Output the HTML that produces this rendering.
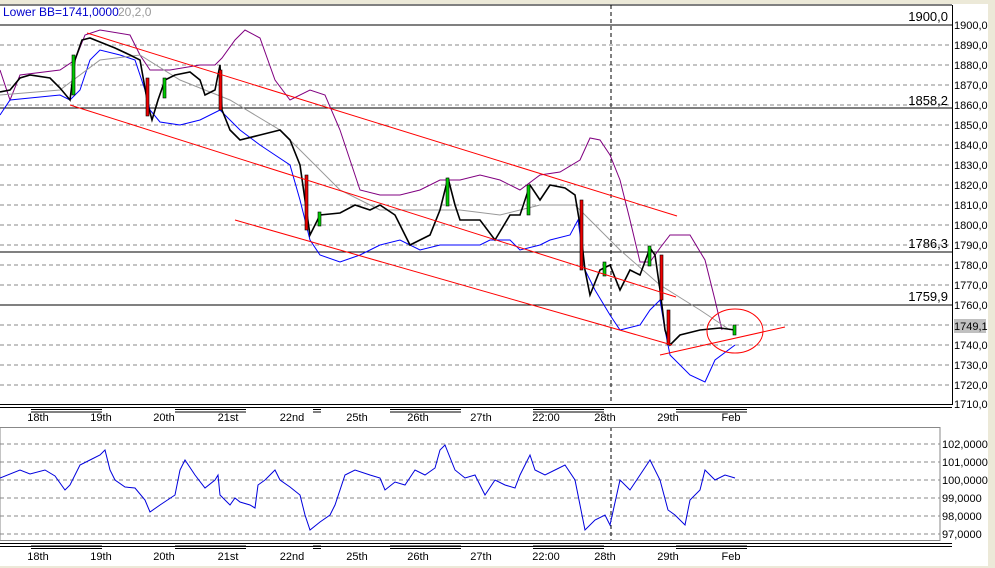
<!DOCTYPE html>
<html><head><meta charset="utf-8"><style>
body{margin:0;width:995px;height:568px;overflow:hidden;background:#ece9d8;font-family:"Liberation Sans",sans-serif}
svg{display:block}
text{font-family:"Liberation Sans",sans-serif;font-size:11px}
</style></head><body>
<svg width="995" height="568" xmlns="http://www.w3.org/2000/svg">
<rect x="0" y="4" width="988" height="562" fill="#fff"/>
<line x1="0" y1="5" x2="952" y2="5" stroke="#000"/>
<g stroke="#888" stroke-dasharray="4,3">
<line x1="0" y1="45" x2="952" y2="45"/><line x1="0" y1="65" x2="952" y2="65"/><line x1="0" y1="85" x2="952" y2="85"/><line x1="0" y1="105" x2="952" y2="105"/><line x1="0" y1="125" x2="952" y2="125"/><line x1="0" y1="145" x2="952" y2="145"/><line x1="0" y1="165" x2="952" y2="165"/><line x1="0" y1="185" x2="952" y2="185"/><line x1="0" y1="205" x2="952" y2="205"/><line x1="0" y1="225" x2="952" y2="225"/><line x1="0" y1="245" x2="952" y2="245"/><line x1="0" y1="265" x2="952" y2="265"/><line x1="0" y1="285" x2="952" y2="285"/><line x1="0" y1="325" x2="952" y2="325"/><line x1="0" y1="345" x2="952" y2="345"/><line x1="0" y1="365" x2="952" y2="365"/><line x1="0" y1="385" x2="952" y2="385"/>
<line x1="0" y1="444" x2="940" y2="444"/><line x1="0" y1="462" x2="940" y2="462"/><line x1="0" y1="480" x2="940" y2="480"/><line x1="0" y1="498" x2="940" y2="498"/><line x1="0" y1="516" x2="940" y2="516"/><line x1="0" y1="534" x2="940" y2="534"/>
</g>
<g stroke="#000">
<line x1="0" y1="25" x2="952" y2="25"/><line x1="0" y1="108" x2="952" y2="108"/><line x1="0" y1="252" x2="952" y2="252"/><line x1="0" y1="305" x2="952" y2="305"/>
<line x1="952.5" y1="5" x2="952.5" y2="405"/>
<line x1="0" y1="404.5" x2="952" y2="404.5"/><line x1="0" y1="407.5" x2="952" y2="407.5"/>
<line x1="0" y1="543.5" x2="952" y2="543.5"/><line x1="0" y1="546.5" x2="952" y2="546.5"/>
<line x1="611" y1="5" x2="611" y2="404" stroke-dasharray="4,3"/>
<line x1="611" y1="427" x2="611" y2="541" stroke-dasharray="4,3"/>
</g>
<rect x="0" y="427.5" width="940" height="113" fill="none" stroke="#888"/>
<g stroke="#000" stroke-width="1">
<line x1="31" y1="409.5" x2="102" y2="409.5"/><line x1="31" y1="412" x2="102" y2="412"/>
<line x1="175" y1="409.5" x2="246" y2="409.5"/><line x1="175" y1="412" x2="246" y2="412"/>
<line x1="313" y1="409.5" x2="321" y2="409.5"/><line x1="313" y1="412" x2="321" y2="412"/>
<line x1="390" y1="409.5" x2="461" y2="409.5"/><line x1="390" y1="412" x2="461" y2="412"/>
<line x1="533" y1="409.5" x2="604" y2="409.5"/><line x1="533" y1="412" x2="604" y2="412"/>
<line x1="676" y1="409.5" x2="747" y2="409.5"/><line x1="676" y1="412" x2="747" y2="412"/>
<line x1="31" y1="546" x2="102" y2="546"/><line x1="31" y1="548.5" x2="102" y2="548.5"/>
<line x1="175" y1="546" x2="246" y2="546"/><line x1="175" y1="548.5" x2="246" y2="548.5"/>
<line x1="313" y1="546" x2="321" y2="546"/><line x1="313" y1="548.5" x2="321" y2="548.5"/>
<line x1="390" y1="546" x2="461" y2="546"/><line x1="390" y1="548.5" x2="461" y2="548.5"/>
<line x1="533" y1="546" x2="604" y2="546"/><line x1="533" y1="548.5" x2="604" y2="548.5"/>
<line x1="676" y1="546" x2="747" y2="546"/><line x1="676" y1="548.5" x2="747" y2="548.5"/>
</g>
<polyline fill="none" stroke="#800080" points="0,70 10,100 20,75 60,70 75,60 85,35 100,30 130,35 140,55 150,70 170,70 200,65 215,65 222,58 235,40 245,30 260,38 275,80 290,100 310,90 325,95 340,130 360,190 380,195 400,195 420,190 440,180 460,180 480,175 500,180 520,190 540,175 560,172 580,160 590,138 600,140 610,155 620,180 630,220 640,262 650,262 660,248 670,235 690,235 705,260 715,300 722,330"/>
<polyline fill="none" stroke="#0000ff" points="0,115 10,100 30,98 60,95 70,100 80,90 90,60 100,50 120,55 135,60 145,90 150,110 160,122 180,125 200,120 220,110 240,130 260,145 275,155 290,165 300,200 310,240 320,255 340,262 360,255 380,245 400,240 420,250 440,245 460,245 480,245 490,240 510,240 520,250 540,245 550,240 570,235 578,220 585,270 595,290 610,315 620,330 640,325 650,310 660,300 665,330 670,355 690,375 705,382 715,360 735,345"/>
<polyline fill="none" stroke="#999" points="0,95 60,90 100,60 140,55 180,80 230,100 280,130 300,150 340,190 380,210 420,210 460,210 500,215 540,205 575,205 620,250 660,285 700,310 730,330"/>
<polyline fill="none" stroke="#000" stroke-width="1.6" points="0,92 10,90 20,78 30,75 50,78 60,88 70,100 75,60 82,40 90,38 100,42 115,48 130,55 140,60 148,105 152,120 158,100 165,80 175,75 190,72 200,80 205,95 215,90 220,65 222,110 230,130 240,140 260,135 280,130 290,140 300,165 305,200 310,235 320,215 340,213 355,205 370,210 380,205 395,215 400,225 410,245 420,240 430,235 440,210 448,178 455,205 460,220 480,220 495,240 510,215 520,215 530,185 540,200 550,185 565,188 575,195 580,225 585,270 590,295 600,270 610,265 620,290 630,270 640,275 650,248 655,255 660,290 665,330 670,345 680,335 700,330 720,328 735,330"/>
<g fill="#00cc00" stroke="#000" stroke-width="0.6"><rect x="72" y="55" width="3" height="40"/><rect x="163" y="78" width="3" height="20"/><rect x="318" y="212" width="3" height="14"/><rect x="446" y="178" width="3" height="28"/><rect x="527" y="185" width="3" height="30"/><rect x="648" y="246" width="3" height="20"/><rect x="733" y="325" width="3" height="10"/><rect x="603" y="262" width="3" height="14"/></g>
<g fill="#ee0000" stroke="#000" stroke-width="0.6"><rect x="146" y="78" width="3" height="38"/><rect x="219" y="70" width="3" height="40"/><rect x="305" y="175" width="3" height="55"/><rect x="580" y="200" width="3" height="70"/><rect x="660" y="255" width="3" height="45"/><rect x="667" y="310" width="3" height="35"/></g>
<g stroke="#f00" fill="none">
<line x1="87" y1="33" x2="677" y2="216"/>
<line x1="70" y1="105" x2="676" y2="297"/>
<line x1="235" y1="220" x2="672" y2="345"/>
<line x1="660" y1="355" x2="785" y2="327"/>
<ellipse cx="735" cy="331" rx="28" ry="22"/>
</g>
<polyline fill="none" stroke="#0000dd" points="0,478 20,470 30,474 45,470 55,476 65,490 70,485 80,465 90,460 100,455 105,450 110,470 115,480 125,487 135,488 145,500 150,512 160,505 175,495 180,470 185,460 195,475 205,488 215,480 218,475 220,495 230,505 235,498 240,502 250,505 255,508 258,485 265,480 275,470 280,480 290,487 300,495 305,515 310,530 320,522 330,515 335,505 345,475 355,470 370,475 380,478 385,490 395,482 405,485 415,470 425,475 435,468 440,450 445,445 455,470 465,478 475,475 485,495 495,480 505,485 515,488 520,475 530,455 535,470 545,475 555,470 565,465 575,480 580,505 585,530 595,520 605,515 610,525 620,480 630,490 640,475 650,460 660,480 668,510 675,515 685,525 690,500 700,490 705,470 715,480 725,475 735,478"/>
<text x="3" y="16" fill="#0000cc" style="font-size:12px">Lower BB=1741,0000</text><text x="118" y="16" fill="#999" style="font-size:12px">20,2,0</text>
<g text-anchor="end" fill="#000" style="font-size:13px"><text x="948" y="21" style="font-size:13px">1900,0</text><text x="948" y="105" style="font-size:13px">1858,2</text><text x="948" y="248" style="font-size:13px">1786,3</text><text x="948" y="301" style="font-size:13px">1759,9</text></g>
<rect x="954" y="319" width="32" height="14" fill="#c0c0c0"/>
<g fill="#000"><text x="954" y="29">1900,0</text><text x="954" y="49">1890,0</text><text x="954" y="69">1880,0</text><text x="954" y="89">1870,0</text><text x="954" y="109">1860,0</text><text x="954" y="129">1850,0</text><text x="954" y="149">1840,0</text><text x="954" y="169">1830,0</text><text x="954" y="189">1820,0</text><text x="954" y="209">1810,0</text><text x="954" y="229">1800,0</text><text x="954" y="249">1790,0</text><text x="954" y="269">1780,0</text><text x="954" y="289">1770,0</text><text x="954" y="309">1760,0</text><text x="954" y="330">1749,1</text><text x="954" y="349">1740,0</text><text x="954" y="369">1730,0</text><text x="954" y="389">1720,0</text><text x="954" y="408">1710,0</text>
<text x="942" y="448">102,0000</text><text x="942" y="466">101,0000</text><text x="942" y="484">100,0000</text><text x="942" y="502">99,0000</text><text x="942" y="520">98,0000</text><text x="942" y="538">97,0000</text></g>
<g fill="#000" text-anchor="middle">
<text x="38" y="421">18th</text><text x="101" y="421">19th</text><text x="164" y="421">20th</text><text x="228" y="421">21st</text><text x="292" y="421">22nd</text><text x="357" y="421">25th</text><text x="418" y="421">26th</text><text x="481" y="421">27th</text><text x="546" y="421">22:00</text><text x="605" y="421">28th</text><text x="668" y="421">29th</text><text x="731" y="421">Feb</text>
<text x="38" y="560">18th</text><text x="101" y="560">19th</text><text x="164" y="560">20th</text><text x="228" y="560">21st</text><text x="292" y="560">22nd</text><text x="357" y="560">25th</text><text x="418" y="560">26th</text><text x="481" y="560">27th</text><text x="546" y="560">22:00</text><text x="605" y="560">28th</text><text x="668" y="560">29th</text><text x="731" y="560">Feb</text>
</g>
</svg>
</body></html>
